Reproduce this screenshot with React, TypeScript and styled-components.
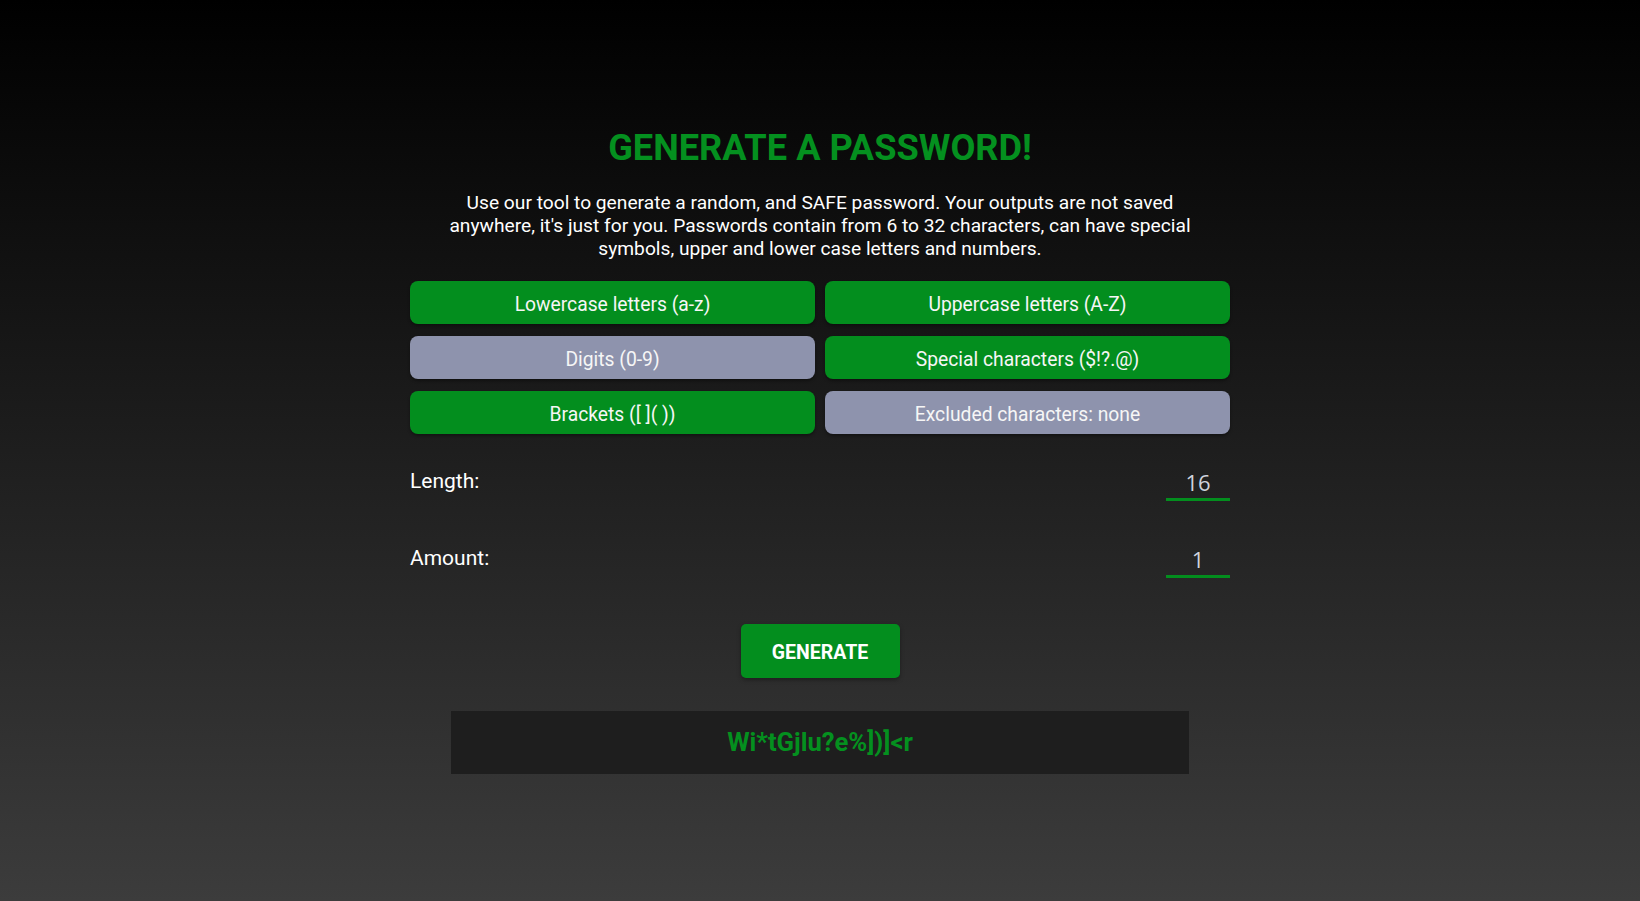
import React, { useState } from 'react';
import styled, { createGlobalStyle } from 'styled-components';

const GlobalStyle = createGlobalStyle`
  html, body {
    margin: 0;
    padding: 0;
  }

  body {
    font-family: Roboto, "Liberation Sans", Arial, sans-serif;
    background: #000;
  }

  * {
    box-sizing: border-box;
  }
`;

const Page = styled.div`
  min-height: 100vh;
  background: linear-gradient(180deg, #000000 0%, #3c3c3c 100%);
  display: flex;
  justify-content: center;
  padding-top: 127px;
`;

const Wrapper = styled.main`
  width: 820px;
  display: flex;
  flex-direction: column;
  align-items: center;
`;

const Title = styled.h1`
  margin: 0;
  font-size: 36.2px;
  font-weight: 700;
  line-height: 42px;
  color: #04901f;
`;

const Intro = styled.p`
  width: 760px;
  margin: 22px 0 0;
  font-size: 19.2px;
  line-height: 23px;
  text-align: center;
  color: #ffffff;
`;

const OptionGrid = styled.div`
  width: 100%;
  margin-top: 21px;
  display: grid;
  grid-template-columns: 1fr 1fr;
  column-gap: 10px;
  row-gap: 12px;
`;

const OptionButton = styled.button<{ $active: boolean }>`
  height: 43px;
  padding: 3px 0 0;
  border: none;
  border-radius: 8px;
  background: ${(p) => (p.$active ? '#038e1e' : '#8e93ad')};
  color: #f6f6f6;
  font-family: Roboto, "Liberation Sans", Arial, sans-serif;
  font-size: 19.3px;
  cursor: pointer;
  box-shadow: 0 2px 3px rgba(0, 0, 0, 0.35);
`;

const Settings = styled.div`
  width: 100%;
  margin-top: 34px;
  display: flex;
  flex-direction: column;
  gap: 44px;
`;

const SettingRow = styled.label`
  display: flex;
  justify-content: space-between;
  align-items: flex-start;
  padding-top: 1px;
`;

const SettingLabel = styled.span`
  font-size: 21px;
  line-height: 24px;
  color: #ffffff;
`;

const NumberField = styled.input`
  width: 64px;
  height: 33px;
  margin-top: -1px;
  padding: 0 0 2px;
  border: none;
  border-bottom: 3px solid #038e1e;
  background: transparent;
  color: #cfd3dc;
  font-family: "Open Sans", "DejaVu Sans", sans-serif;
  font-size: 22px;
  line-height: 28px;
  text-align: center;
  outline: none;
`;

const GenerateButton = styled.button`
  margin-top: 46px;
  width: 159px;
  height: 54px;
  padding: 2px 0 0;
  border: none;
  border-radius: 5px;
  background: #038e1e;
  color: #ffffff;
  font-family: Roboto, "Liberation Sans", Arial, sans-serif;
  font-size: 19.5px;
  font-weight: 700;
  cursor: pointer;
  box-shadow: 0 2px 4px rgba(0, 0, 0, 0.35);
`;

const Output = styled.div`
  width: 90%;
  height: 63px;
  margin-top: 33px;
  background: #1e1e1e;
  display: flex;
  align-items: center;
  justify-content: center;
  padding-bottom: 1px;
  color: #04901f;
  font-size: 25.6px;
  font-weight: 700;
`;

const options = [
  { label: 'Lowercase letters (a-z)', active: true },
  { label: 'Uppercase letters (A-Z)', active: true },
  { label: 'Digits (0-9)', active: false },
  { label: 'Special characters ($!?.@)', active: true },
  { label: 'Brackets ([ ]( ))', active: true },
  { label: 'Excluded characters: none', active: false },
];

export default function App() {
  const [state, setState] = useState(options.map((o) => o.active));
  const [length, setLength] = useState('16');
  const [amount, setAmount] = useState('1');

  return (
    <>
      <GlobalStyle />
      <Page>
        <Wrapper>
          <Title>GENERATE A PASSWORD!</Title>
          <Intro>
            Use our tool to generate a random, and SAFE password. Your outputs are not saved
            anywhere, it's just for you. Passwords contain from 6 to 32 characters, can have
            special symbols, upper and lower case letters and numbers.
          </Intro>

          <OptionGrid>
            {options.map((o, i) => (
              <OptionButton
                key={o.label}
                $active={state[i]}
                onClick={() => setState((s) => s.map((v, j) => (j === i ? !v : v)))}
              >
                {o.label}
              </OptionButton>
            ))}
          </OptionGrid>

          <Settings>
            <SettingRow>
              <SettingLabel>Length:</SettingLabel>
              <NumberField value={length} onChange={(e) => setLength(e.target.value)} />
            </SettingRow>
            <SettingRow>
              <SettingLabel>Amount:</SettingLabel>
              <NumberField value={amount} onChange={(e) => setAmount(e.target.value)} />
            </SettingRow>
          </Settings>

          <GenerateButton>GENERATE</GenerateButton>

          <Output>Wi*tGjlu?e%])]&lt;r</Output>
        </Wrapper>
      </Page>
    </>
  );
}
